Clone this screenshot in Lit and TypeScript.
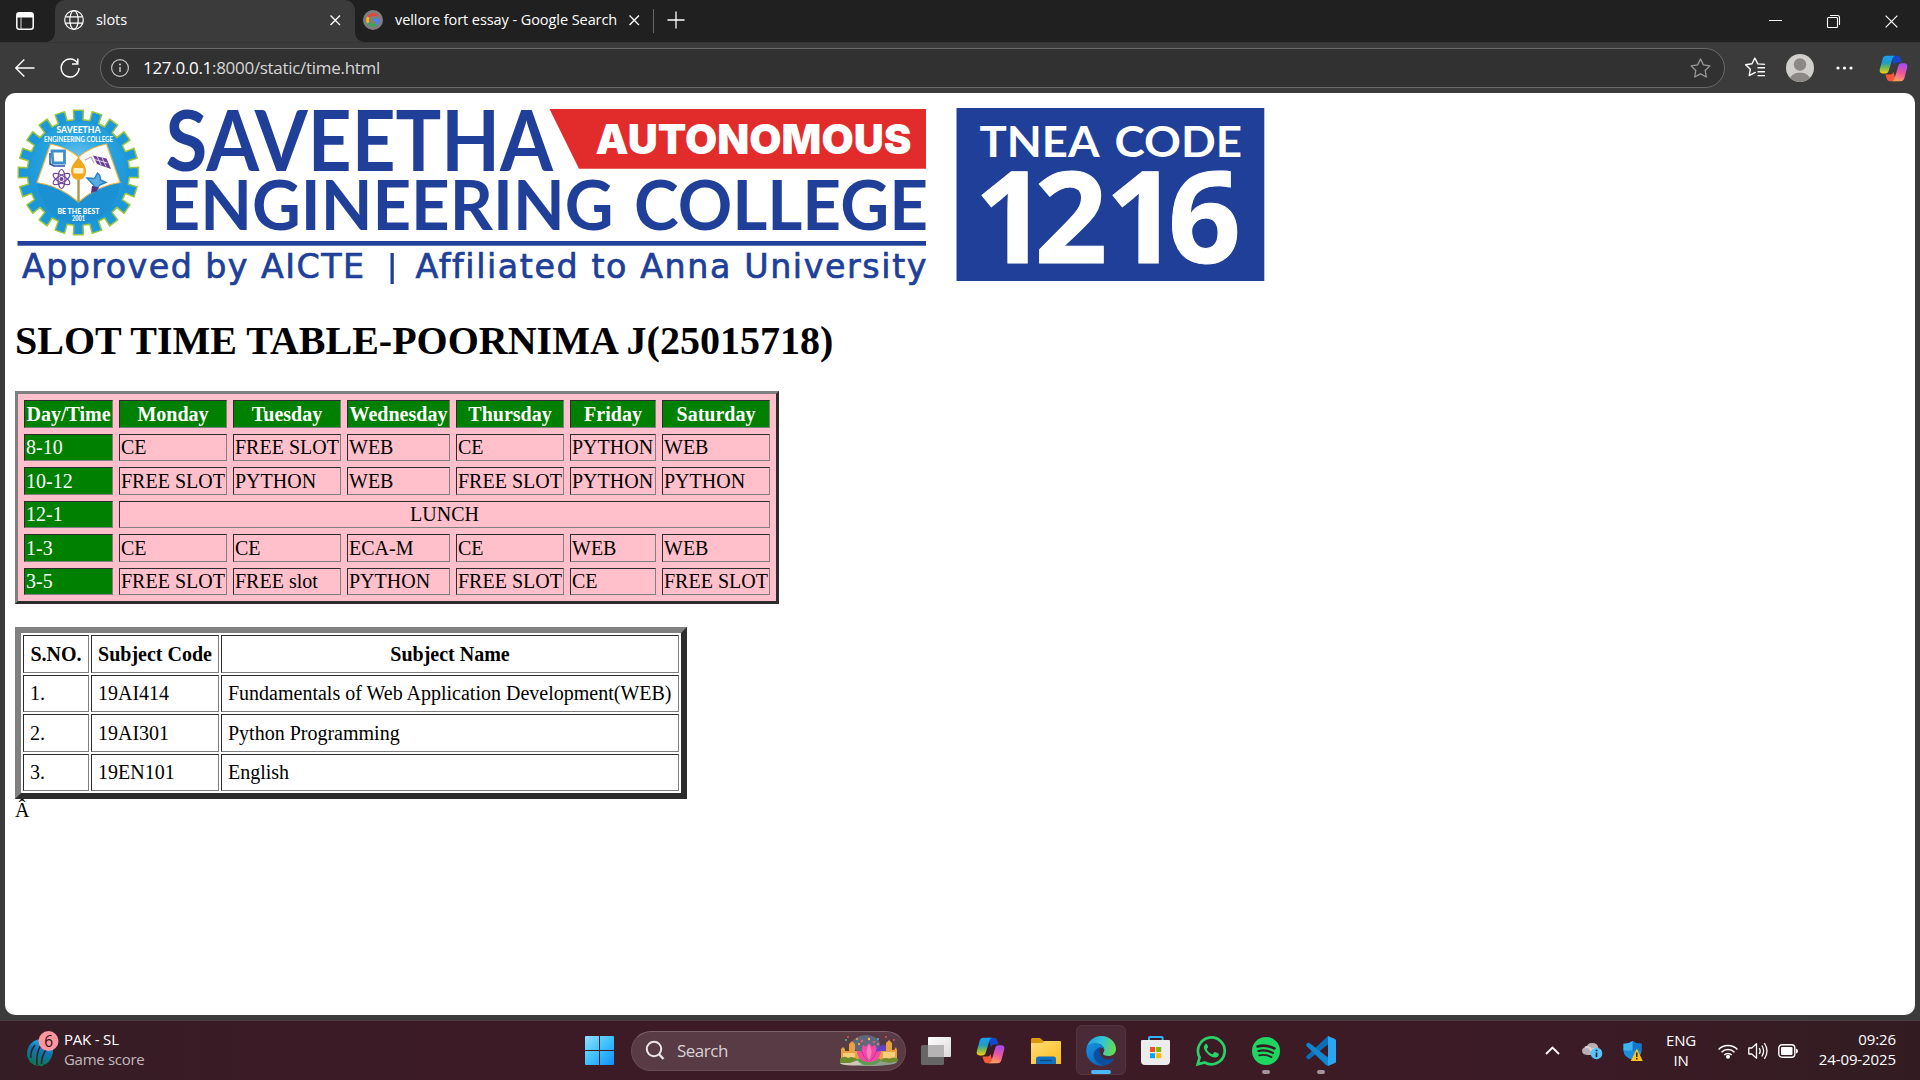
import { LitElement, html, css } from "lit";
import { customElement } from "lit/decorators.js";

const UI = css`"Open Sans", "Noto Sans", sans-serif`;

/* ---------- shared icon drawings ---------- */
const copilot = (id: string) => html`<svg width="29" height="27" viewBox="0 0 29 27">
  <defs>
    <linearGradient id="${id}a" x1="0" y1="0" x2="0" y2="1">
      <stop offset="0" stop-color="#18a0f2" /><stop offset=".4" stop-color="#1f9bc9" />
      <stop offset=".7" stop-color="#7dbb4a" /><stop offset="1" stop-color="#f5cf12" />
    </linearGradient>
    <linearGradient id="${id}b" x1="0.6" y1="0" x2="0.3" y2="1">
      <stop offset="0" stop-color="#a64af0" /><stop offset=".5" stop-color="#f0569c" /><stop offset="1" stop-color="#ffa35c" />
    </linearGradient>
  </defs>
  <path d="M12 .8h6.200c1.800 0 2.700 1 3.200 2.600l1.300 4.200h-4.200c-2 0-2.900 1.200-3.400 2.800l-1.500-5z" fill="#1747c8" />
  <path d="M17 26.200h-6c-1.800 0-2.800-1-3.300-2.600l-1.300-4h4.800c2 0 2.800-1.200 3.300-2.800l1.300 5z" fill="#f4583a" />
  <path d="M7.500.8h8.700c-1.700.4-2.400 1.600-2.900 3.200L9.800 15.500c-.6 2-1.600 2.900-3.500 2.900H3.600C1.200 18.400.2 16.600.8 14.300L3.600 4C4.200 1.900 5.500.8 7.500.8z" fill="url(#${id}a)" />
  <path d="M21.500 26.200h-8.700c1.700-.4 2.400-1.600 2.900-3.200l3.500-11.800c.6-2 1.600-2.900 3.500-2.900h2.700c2.400 0 3.400 1.800 2.800 4.100L25.400 23c-.6 2.100-1.900 3.200-3.900 3.200z" fill="url(#${id}b)" />
</svg>`;

const cross = (s: number, w = 1.3) => html`<svg width="${s}" height="${s}" viewBox="0 0 12 12">
  <path d="M.6.6l10.800 10.800M11.400.6L.6 11.400" stroke="#fff" stroke-width="${w}" fill="none" />
</svg>`;

/* ---------- college banner ---------- */
@customElement("college-banner")
class CollegeBanner extends LitElement {
  static styles = css`
    :host { display: block; height: 188px; }
    svg { display: block; overflow: visible; }
    .navy { fill: #203f99; }
    .white { fill: #fff; }
    .lato { font-family: Lato, sans-serif; }
    .heavy { font-family: Inter, sans-serif; font-weight: 900; }
    .num { font-family: "Open Sans", sans-serif; font-weight: 700; stroke: #fff; stroke-width: 1px; }
    .tag { font-family: "DejaVu Sans", sans-serif; font-variant-ligatures: none; stroke: #203f99; stroke-width: 0.7px; }
  `;

  private gear() {
    const pts: string[] = [];
    const n = 20;
    for (let i = 0; i < n; i++) {
      const a = (i * 2 * Math.PI) / n - Math.PI / 2;
      const at = (r: number, half: number) => {
        const t = Math.atan2(half, r);
        pts.push(`${(78.4 + r * 0.965 * Math.cos(a + t)).toFixed(2)},${(172.5 + r * Math.sin(a + t)).toFixed(2)}`);
      };
      at(53, -4.8); at(62.5, -5.2); at(62.5, 5.2); at(53, 4.8);
    }
    return pts.join(" ");
  }

  render() {
    return html`<svg width="1255" height="188" viewBox="15 103 1255 188">
      <defs>
        <radialGradient id="sky" cx=".5" cy=".4" r=".6">
          <stop offset="0" stop-color="#7cc8f2" /><stop offset=".45" stop-color="#2aa7e3" /><stop offset="1" stop-color="#1b93d5" />
        </radialGradient>
      </defs>
      <polygon points="${this.gear()}" fill="#1c97da" stroke="#9cc63b" stroke-width="1.500" stroke-linejoin="round" />
      <ellipse cx="78.400" cy="172.500" rx="49" ry="50.500" fill="url(#sky)" />
      <path d="M37 183c14 2 30 10 41.500 20 11.500-10 27-18 41.500-20-2 22-19 40-41.500 40S39 205 37 183z" fill="#1b90d3" />
      <path d="M50.500 144c11 2 21 7 28 13 7-6 17-11 28-13l13.500 38.500c-16 2-30 9.500-41.500 19.500-11.500-10-25-17-41.500-19.500z" fill="#fff" stroke="#eeb548" stroke-width="1.200" />
      <path d="M78.500 180v22" stroke="#a99a4c" stroke-width="2.400" />
      <path d="M78.500 156c1.500 5 7.500 8 7.500 15 0 5-3 9-7.500 9s-7.500-4-7.500-9c0-7 6-10 7.500-15z" fill="#f2a81d" />
      <rect x="73.500" y="168" width="10" height="5.500" rx="1" fill="#fff2cf" />
      <g fill="none">
        <path d="M52 151h12.500v12H53z" stroke="#3e8fcc" stroke-width="2.800" />
        <path d="M50 153v11l4 2h11" stroke="#28539f" stroke-width="1.500" />
        <g stroke="#72449a" stroke-width="1.200">
          <ellipse cx="61.500" cy="179" rx="3.500" ry="9.500" />
          <ellipse cx="61.500" cy="179" rx="3.500" ry="9.500" transform="rotate(60 61.500 179)" />
          <ellipse cx="61.500" cy="179" rx="3.500" ry="9.500" transform="rotate(120 61.500 179)" />
        </g>
        <path d="M85 160l6-3 3 6" stroke="#b9a3cf" stroke-width="1.200" />
      </g>
      <path d="M93 155.500l13.500 3 4.500 10.500-14-5z" fill="#6c3f94" />
      <path d="M97 156l4 9M102 157.500l4 9M94.500 159.500l13 3.500" stroke="#e9e0f2" stroke-width=".9" fill="none" />
      <path d="M87 178l7.500.5 3-5.500q3 2 3 7l5.500 2.500-6.500 2.500-3 6-3-6z" fill="#58aee0" stroke="#2c7fc4" stroke-width="1.400" />
      <circle cx="61.500" cy="179" r="2" fill="#72449a" />
      <path d="M92 186l6 1-1 4-6 2z" fill="#5c2f86" />
      <g class="lato white" font-weight="900">
        <text x="56.500" y="133" font-size="8.500" textLength="44" lengthAdjust="spacingAndGlyphs">SAVEETHA</text>
        <text x="44" y="142" font-size="7.500" font-weight="700" textLength="69" lengthAdjust="spacingAndGlyphs">ENGINEERING COLLEGE</text>
        <text x="57.500" y="213.500" font-size="7" textLength="42" lengthAdjust="spacingAndGlyphs">BE THE BEST</text>
        <text x="72" y="220.500" font-size="6.500" textLength="13" lengthAdjust="spacingAndGlyphs">2001</text>
      </g>
      <g class="lato navy" font-weight="700">
        <text x="165.500" y="170.700" font-size="83.500" textLength="387.500" lengthAdjust="spacingAndGlyphs">SAVEETHA</text>
        <text x="161.500" y="230.300" font-size="69" textLength="452" lengthAdjust="spacingAndGlyphs">ENGINEERING</text>
        <text x="634" y="230.300" font-size="69" textLength="294" lengthAdjust="spacingAndGlyphs">COLLEGE</text>
      </g>
      <polygon points="549.500,109 926,109 926,168.800 579,168.800" fill="#e22c2b" />
      <text class="heavy white" x="595.500" y="153.500" font-size="41" textLength="316" lengthAdjust="spacingAndGlyphs">AUTONOMOUS</text>
      <rect class="navy" x="17.500" y="241" width="908.500" height="4.700" />
      <g class="tag navy" font-size="33.300">
        <text x="22" y="277.700" textLength="342">Approved by AICTE</text>
        <rect x="390.500" y="253" width="3.300" height="31" stroke="none" />
        <text x="415.500" y="277.700" textLength="511">Affiliated to Anna University</text>
      </g>
      <rect class="navy" x="956.500" y="108" width="307.800" height="173" />
      <g class="lato white" font-weight="700" font-size="42.500">
        <text x="979.500" y="156.700" textLength="120" lengthAdjust="spacingAndGlyphs">TNEA</text>
        <text x="1114.500" y="156.700" textLength="127.500" lengthAdjust="spacingAndGlyphs">CODE</text>
      </g>
      <text class="num white" y="262.700" font-size="127.500" x="974.500 1034.500 1105.500 1168">1216</text>
    </svg>`;
  }
}

/* ---------- browser chrome ---------- */
@customElement("browser-chrome")
class BrowserChrome extends LitElement {
  static styles = css`
    :host { display: block; font-family: ${UI}; color: #fff; }
    svg { display: block; flex: none; overflow: visible; }
    .strip { height: 42px; background: #202020; display: flex; align-items: center; box-sizing: border-box; }
    .ws { width: 55px; display: flex; padding-left: 16px; box-sizing: border-box; }
    .tab { position: relative; height: 42px; width: 300px; box-sizing: border-box; background: #3b3b3b; border-radius: 10px 10px 0 0; display: flex; align-items: center; padding: 0 15px 2px 9px; }
    .tab::before, .tab::after { content: ""; position: absolute; bottom: 0; width: 9px; height: 9px; }
    .tab::before { left: -9px; background: radial-gradient(circle at 0 0, #202020 8.5px, #3b3b3b 9px); }
    .tab::after { right: -9px; background: radial-gradient(circle at 100% 0, #202020 8.5px, #3b3b3b 9px); }
    .title { font-size: 14.5px; letter-spacing: -0.07px; margin-left: 12px; flex: 1; white-space: nowrap; padding-bottom: 2px; }
    .tab2 { width: 297px; height: 42px; box-sizing: border-box; display: flex; align-items: center; padding: 0 13px 2px 8px; }
    .sep { width: 1px; height: 24px; background: #666; margin: 0 13px 0 1px; }
    .plus { padding-bottom: 2px; }
    .win { margin-left: auto; display: flex; align-items: center; gap: 45px; padding-right: 22px; }
    .bar { height: 51px; background: #3b3b3b; display: flex; align-items: center; box-sizing: border-box; border-top: 1px solid #353535; }
    .nav { display: flex; gap: 25px; padding-left: 15px; width: 100px; box-sizing: border-box; }
    .addr { width: 1625px; height: 40px; box-sizing: border-box; border: 1px solid #6a6a6a; border-radius: 20px; background: #313131; display: flex; align-items: center; padding: 0 13px 0 10px; }
    .url { font-size: 17px; letter-spacing: -0.3px; margin-left: 14px; flex: 1; color: #d6d6d6; white-space: nowrap; line-height: 24px; }
    .host { color: #fff; }
    .tools { display: flex; align-items: center; flex: 1; padding-left: 20px; }
    .a { margin-left: 21px; } .b { margin-left: 22px; } .c { margin-left: 26px; }
  `;
  render() {
    return html`
      <div class="strip">
        <div class="ws"><svg width="18" height="18" viewBox="0 0 18 18"><rect x=".8" y=".8" width="16.400" height="16.400" rx="2.500" fill="none" stroke="#fff" stroke-width="1.500" /><path d="M1 1h16v4.500H1z" fill="#fff" /><path d="M5 5v12" stroke="#bbb" stroke-width="1.200" /></svg></div>
        <div class="tab">
          <svg width="20" height="20" viewBox="0 0 20 20" fill="none" stroke="#fff" stroke-width="1.200"><circle cx="10" cy="10" r="9.300" /><ellipse cx="10" cy="10" rx="4.200" ry="9.300" /><path d="M1.500 6.800h17M1.500 13.200h17" /></svg>
          <span class="title">slots</span>${cross(10.5, 1.5)}
        </div>
        <div class="tab2">
          <svg width="20" height="20" viewBox="0 0 20 20"><circle cx="10" cy="10" r="10" fill="#807d7c" /><g fill="none" stroke-width="2.500"><path d="M14.200 6.200A5.500 5.500 0 0 0 5.300 7.200" stroke="#ea4335" /><path d="M5.300 7.200a5.500 5.500 0 0 0 0 5.600" stroke="#fbbc05" /><path d="M5.300 12.800a5.500 5.500 0 0 0 8.200 1.300" stroke="#34a853" /><path d="M13.500 14.100a5.500 5.500 0 0 0 2-4.100H10.300" stroke="#4285f4" /></g></svg>
          <span class="title">vellore fort essay - Google Search</span>${cross(10.5, 1.5)}
        </div>
        <div class="sep"></div>
        <div class="plus"><svg width="18" height="18" viewBox="0 0 18 18"><path d="M9 .5v17M.5 9h17" stroke="#fff" stroke-width="1.300" /></svg></div>
        <div class="win">
          <svg width="13" height="13" viewBox="0 0 13 13"><path d="M0 5.500h13" stroke="#fff" /></svg>
          <svg width="13" height="13" viewBox="0 0 13 13" fill="none" stroke="#fff" stroke-width="1.100"><rect x=".5" y="2.500" width="10" height="10" rx="1" /><path d="M3 .5h7.500q2 0 2 2V10" /></svg>
          ${cross(13, 1.1)}
        </div>
      </div>
      <div class="bar">
        <div class="nav">
          <svg width="20" height="20" viewBox="0 0 20 20" fill="none" stroke="#fff" stroke-width="1.400"><path d="M19.500 10H.8M9.300 1.500L.8 10l8.500 8.500" /></svg>
          <svg width="20" height="20" viewBox="0 0 20 20" fill="none" stroke="#fff" stroke-width="1.500"><path d="M17.500 5A8.900 9 0 1 0 19 10M17.800.5v5.600h-5.800" /></svg>
        </div>
        <div class="addr">
          <svg width="18" height="18" viewBox="0 0 18 18" fill="none" stroke="#c8c8c8" stroke-width="1.200"><circle cx="9" cy="9" r="8.400" /><path d="M9 8v5" stroke-width="1.500" /><circle cx="9" cy="5.500" r=".5" /></svg>
          <span class="url"><span class="host">127.0.0.1</span>:8000/static/time.html</span>
          <svg width="21" height="20" viewBox="0 0 21 20" fill="none" stroke="#9a9a9a" stroke-width="1.300" stroke-linejoin="round"><path d="M10.500 1l2.900 5.900 6.500 1-4.700 4.600 1.100 6.500-5.800-3.100L4.700 19l1.100-6.500L1.100 7.900l6.500-1z" /></svg>
        </div>
        <div class="tools">
          <svg width="20" height="20" viewBox="0 0 20 20" fill="none" stroke="#fff" stroke-width="1.400" stroke-linejoin="round"><path d="M20 7.400l-7.200-.5L9.800 1 7 6.800l-6.300 1 4.600 4.500L4.200 18.600l5.600-3 1 -.3M12.500 10.800H20M12.500 14.800H20M12.500 18.600H20" transform="translate(0 -1)" /></svg>
          <svg class="a" width="28" height="28" viewBox="0 0 28 28"><clipPath id="av"><circle cx="14" cy="14" r="14" /></clipPath><circle cx="14" cy="14" r="14" fill="#d1cfcb" /><circle cx="14" cy="10.500" r="6.200" fill="#8c8885" /><ellipse cx="14" cy="25.500" rx="10" ry="7" fill="#8c8885" clip-path="url(#av)" /></svg>
          <svg class="b" width="17" height="4" viewBox="0 0 17 4" fill="#fff"><circle cx="2" cy="2" r="1.600" /><circle cx="8.500" cy="2" r="1.600" /><circle cx="15" cy="2" r="1.600" /></svg>
          <span class="c">${copilot("t")}</span>
        </div>
      </div>`;
  }
}

/* ---------- web page ---------- */
const DAYS = ["Day/Time", "Monday", "Tuesday", "Wednesday", "Thursday", "Friday", "Saturday"];
const SLOTS: string[][] = [
  ["8-10", "CE", "FREE SLOT", "WEB", "CE", "PYTHON", "WEB"],
  ["10-12", "FREE SLOT", "PYTHON", "WEB", "FREE SLOT", "PYTHON", "PYTHON"],
  ["12-1", "LUNCH"],
  ["1-3", "CE", "CE", "ECA-M", "CE", "WEB", "WEB"],
  ["3-5", "FREE SLOT", "FREE slot", "PYTHON", "FREE SLOT", "CE", "FREE SLOT"],
];
const SUBJECTS = [
  ["1.", "19AI414", "Fundamentals of Web Application Development(WEB)"],
  ["2.", "19AI301", "Python Programming"],
  ["3.", "19EN101", "English"],
];

@customElement("slots-page")
class SlotsPage extends LitElement {
  static styles = css`
    :host { display: block; box-sizing: border-box; background: #fff; color: #000; border-radius: 10px; padding: 10px; font: 20px/23px "Liberation Serif", "Times New Roman", serif; overflow: hidden; }
    h1 { font-size: 40px; line-height: 46px; margin: 27px 0; font-weight: bold; white-space: nowrap; }
    table { table-layout: fixed; box-sizing: border-box; border-style: solid; border-color: #808080 #2c2c2c #2c2c2c #808080; border-collapse: separate; }
    th, td { box-sizing: border-box; border: 1px solid; border-color: #2c2c2c #808080 #808080 #2c2c2c; white-space: nowrap; text-align: left; }
    .tt { width: 764px; border-width: 3px; border-spacing: 6px; background: #ffc0cb; margin-bottom: 23px; }
    .tt tr { height: 27px; } .tt tr:nth-child(odd) { height: 28px; }
    .tt th, .tt td { padding: 0 1px; }
    .tt th { text-align: center; }
    .tt tr > :first-child, .tt th { background: #008000; color: #fff; }
    .tt .lunch { text-align: center; }
    .c89 { width: 89px; } .c108 { width: 108px; } .c103 { width: 103px; } .c86 { width: 86px; }
    .st { width: 672px; border-width: 6px; border-spacing: 2px; }
    .st tr { height: 37px; } .st tr:nth-child(odd) { height: 38px; }
    .st th, .st td { padding: 0 6px; }
    .st th { text-align: center; }
    .c66 { width: 66px; } .c128 { width: 128px; }
  `;
  render() {
    return html`
      <college-banner></college-banner>
      <h1>SLOT TIME TABLE-POORNIMA J(25015718)</h1>
      <table class="tt">
        <colgroup><col class="c89" /><col class="c108" /><col class="c108" /><col class="c103" /><col class="c108" /><col class="c86" /><col class="c108" /></colgroup>
        <tbody>
          <tr>${DAYS.map((d) => html`<th>${d}</th>`)}</tr>
          ${SLOTS.map((r) => html`<tr>${r.map((c) => c === "LUNCH" ? html`<td class="lunch" colspan="6">${c}</td>` : html`<td>${c}</td>`)}</tr>`)}
        </tbody>
      </table>
      <table class="st">
        <colgroup><col class="c66" /><col class="c128" /><col /></colgroup>
        <tbody>
          <tr><th>S.NO.</th><th>Subject Code</th><th>Subject Name</th></tr>
          ${SUBJECTS.map((r) => html`<tr>${r.map((c) => html`<td>${c}</td>`)}</tr>`)}
        </tbody>
      </table>
      <div>Â</div>`;
  }
}

/* ---------- taskbar ---------- */
@customElement("task-bar")
class TaskBar extends LitElement {
  static styles = css`
    :host { display: grid; grid-template-columns: 570px 1fr auto; height: 60px; box-sizing: border-box; border-top: 1px solid #4b3c42; background: linear-gradient(90deg, #351d25 0, #3b1b26 300px, #3d1b26 900px, #3b1b25 1600px, #321c22 1920px); font-family: ${UI}; color: #fff; font-size: 15px; line-height: 20px; letter-spacing: -0.2px; }
    svg { display: block; flex: none; overflow: visible; }
    .left { display: flex; align-items: center; padding-left: 26px; }
    .lines { margin-left: 5px; padding-bottom: 4px; white-space: nowrap; }
    .dim { color: #c2babd; letter-spacing: -0.3px; }
    .mid { display: flex; align-items: center; }
    .start { width: 59px; display: flex; justify-content: center; margin-right: 2px; }
    .search { width: 275px; height: 40px; box-sizing: border-box; border: 1px solid #664c55; border-top-color: #7b636b; border-radius: 20px; background: #593b45; display: flex; align-items: center; padding: 0 7px 0 14px; margin-right: 2px; }
    .q { font-size: 17px; letter-spacing: -0.5px; margin-left: 12px; flex: 1; color: #d9d1d4; }
    .app { position: relative; width: 55px; height: 59px; display: flex; align-items: center; justify-content: center; }
    .app.on::before { content: ""; position: absolute; inset: 4px 2px 5px 3px; box-sizing: border-box; border-radius: 6px; background: #492a36; border: 1px solid #543641; }
    .app svg { position: relative; }
    .app::after { content: ""; position: absolute; bottom: 6px; width: 0; height: 4px; border-radius: 2px; background: #a5949a; }
    .app.run::after { width: 8px; }
    .app.on::after { width: 20px; background: #4cb8fb; }
    .right { display: flex; align-items: center; padding-right: 24px; }
    .i1 { margin-right: 22px; } .i2 { margin-right: 20px; } .i3 { margin-right: 23px; } .i4 { margin-right: 10px; }
    .lang { text-align: center; width: 30px; margin-right: 22px; padding-bottom: 2px; }
    .clock { text-align: right; width: 98px; padding-bottom: 4px; white-space: nowrap; letter-spacing: -0.1px; }
  `;
  render() {
    return html`
      <div class="left">
        <svg width="33" height="36" viewBox="0 0 33 36">
          <defs><linearGradient id="ball" x1="0.700" y1="0" x2=".4" y2="1"><stop offset="0" stop-color="#1fb6f5" /><stop offset=".45" stop-color="#0f74b3" /><stop offset="1" stop-color="#0b7a4a" /></linearGradient></defs>
          <path d="M1 20C2 11 8 6 16 6c8 0 12 6 11 13-1 6-4 10-7 12q-2 1-2 0-1 3-3 2-1 1-2-1-2 2-3 0-2 1-3-1-3-1-4-4-2-3-2-7z" fill="url(#ball)" />
          <path d="M9 12q-5 6-4 13M15 12q-5 7-4 20M20.500 16q-5 7-5 15" stroke="#371d26" stroke-width="1.500" fill="none" />
          <circle cx="22.500" cy="8" r="10" fill="#ff959f" />
          <text x="22.500" y="13.500" text-anchor="middle" font-size="15.500" fill="#2b1014">6</text>
        </svg>
        <div class="lines"><div>PAK - SL</div><div class="dim">Game score</div></div>
      </div>
      <div class="mid">
        <div class="start">
          <svg width="29" height="29" viewBox="0 0 29 29"><defs><linearGradient id="wn" x1="0" y1="0" x2="1" y2="1"><stop offset="0" stop-color="#90dfff" /><stop offset=".5" stop-color="#3fc1fd" /><stop offset="1" stop-color="#0f8ffa" /></linearGradient></defs>
            <path d="M1 0h13v14H0V1q0-1 1-1zM15 0h13q1 0 1 1v13H15zM0 15h14v14H1q-1 0-1-1zM15 15h14v13q0 1-1 1H15z" fill="url(#wn)" /></svg>
        </div>
        <div class="search">
          <svg width="19" height="19" viewBox="0 0 19 19" fill="none" stroke="#ece6e8" stroke-width="2"><circle cx="8" cy="8" r="7.200" /><path d="M13 13.200l4.500 4.800" stroke-width="2.400" /></svg>
          <span class="q">Search</span>
          <svg width="58" height="31" viewBox="0 0 58 31">
            <ellipse cx="29" cy="27" rx="28" ry="4" fill="#8fa093" />
            <ellipse cx="12" cy="28" rx="12" ry="2.500" fill="#cfc8b9" />
            <ellipse cx="26" cy="9" rx="14" ry="9" fill="#60687b" />
            <path d="M36 14q6-6 12-3v8H34z" fill="#6443c8" />
            <path d="M1 14l2-2 2 2v2h4V9l3-3 3 3v7h5v9H1zM42 16h4V8l3-3 3 3v7h2l2-3 1 3v10H38v-8z" fill="#e9a03f" />
            <path d="M3 18h12v5H3zM43 17h12v6H43z" fill="#f7cf7b" />
            <path d="M0 24q4-4 8-1 5-3 10 2l-8 3H0zM40 26q4-5 9-2 5-3 9 0v2l-8 2z" fill="#6d8c2c" />
            <path d="M17 24q12-4 24 0-2 6-12 6t-12-6z" fill="#5f9a50" />
            <path d="M17 16q3-.5 5 1-1-4 1-7 2 .5 3 2 1-2 3-4 2 2 3 4 1-1.500 3-2 2 3 1 7 2-1.500 5-1-1 11-12 11T17 16z" fill="#f04aa5" />
            <path d="M29 9q5 8 0 16-5-8 0-16z" fill="#fa7dc0" />
            <path d="M22 17q2 6 6 9M36 17q-2 6-6 9" stroke="#cf2c8a" fill="none" />
            <g><circle cx="8" cy="2" r="1" fill="#e8553c" /><circle cx="6" cy="5" r=".9" fill="#5fb8a0" /><circle cx="17" cy="4" r="1" fill="#f0a040" /><circle cx="22" cy="6" r="1.200" fill="#f46060" /><circle cx="29" cy="4" r="1.200" fill="#f5c04e" /><circle cx="34" cy="7" r="1.100" fill="#f46060" /><circle cx="38" cy="4" r="1" fill="#58b4e0" /><circle cx="46" cy="2" r="1" fill="#e8553c" /><circle cx="54" cy="5" r="1" fill="#e8553c" /><circle cx="19" cy="9" r="1" fill="#f5c04e" /><circle cx="38" cy="9" r="1" fill="#ef74b4" /></g>
          </svg>
        </div>
        <div class="app"><svg width="30" height="28" viewBox="0 0 30 28"><defs><linearGradient id="tv" x1="0" y1="0" x2="1" y2="1"><stop offset="0" stop-color="#fff" /><stop offset="1" stop-color="#d9d9d9" /></linearGradient></defs><rect x="7" width="23" height="20" rx="1" fill="url(#tv)" /><rect y="8" width="23" height="20" rx="1.500" fill="#666" /><rect x="7" y="8" width="16" height="12" fill="#b5b3b3" /></svg></div>
        <div class="app">${copilot("k")}</div>
        <div class="app"><svg width="30" height="26" viewBox="0 0 30 26"><defs><linearGradient id="fo" x1="0" y1="0" x2="1" y2="1"><stop offset="0" stop-color="#ffdd76" /><stop offset="1" stop-color="#fcbc1e" /></linearGradient></defs><path d="M0 1.500Q0 0 1.500 0H9l3.500 3H29v5H0z" fill="#dd9a07" /><path d="M0 5h11l2.500-2H29q1 0 1 1v22H0z" fill="url(#fo)" /><path d="M5 26v-5q0-2.500 2.500-2.500h15q2.500 0 2.500 2.500v5z" fill="#1270be" /><path d="M9 22.500h12" stroke="#084888" stroke-width="1.300" /></svg></div>
        <div class="app on"><svg width="30" height="30" viewBox="0 0 30 30">
          <defs><linearGradient id="e1" x1="0" y1=".3" x2="1" y2=".5"><stop offset="0" stop-color="#1e9fe5" /><stop offset=".5" stop-color="#30c4d8" /><stop offset="1" stop-color="#68dc4c" /></linearGradient><linearGradient id="e2" x1="0" y1="0" x2=".6" y2="1"><stop offset="0" stop-color="#1592e0" /><stop offset="1" stop-color="#0b69c2" /></linearGradient></defs>
          <path d="M.4 13C1.500 5.500 7.500 0 15 0c9 0 15 6.500 15 13 0 4.500-3.500 7-7.500 7-3.500 0-5.500-1.200-5.500-2.300 0-1 1.300-1.700 1.300-4C18.300 10.500 15 7.500 10 7.500 5 7.500 1.500 9.500.4 13z" fill="url(#e1)" />
          <path d="M.3 13C1.200 9.500 5 7.300 9.500 7.300c5 0 8.800 3 8.800 6.500-.5-1.500-2-2.500-4-2.300-3 .3-5.300 4-4.300 8.500 1 5 5 9 9 9.200A15 15 0 0 1 .3 13z" fill="url(#e2)" />
          <path d="M14.300 11.500c-5 1-8 5.500-6 10.500 2 4.800 6.500 8 11.200 7.300 3.500-.7 6.500-3 8.200-5.800.4-.8-.3-1.200-1-.8-3.500 1.600-8.500 1-11.200-2.200-2.400-3-2.600-6.500-1.200-9z" fill="#0d4f9f" />
        </svg></div>
        <div class="app"><svg width="29" height="29" viewBox="0 0 29 29"><path d="M8 6V1.800Q8 1 8.800 1h12q.8 0 .8.800V6" fill="none" stroke="#2eb4f4" stroke-width="2" /><path d="M1 4h27q1 0 1 1v20q0 4-4 4H4q-4 0-4-4V5q0-1 1-1z" fill="#ececec" /><path d="M9 11h5v5H9z" fill="#f25022" /><path d="M15.200 11h5v5h-5z" fill="#7fba00" /><path d="M9 17.200h5v5H9z" fill="#00a4ef" /><path d="M15.200 17.200h5v5h-5z" fill="#ffb900" /></svg></div>
        <div class="app"><svg width="30" height="30" viewBox="0 0 30 30"><path d="M1.700 28.300l1.900-7A13.400 13.400 0 1 1 8.700 26.500z" fill="none" stroke="#25d366" stroke-width="2.700" /><path d="M10.800 8q-.6-.5-1.300 0-1.800 1.500-1.700 3.600c.2 2 2.200 5 4.500 7 2.500 2.100 5 3.200 7.200 3 1.900-.3 3.300-1.700 3.300-3.300 0-.6-.3-.8-.8-1l-2.800-1.300q-.7-.3-1.200.4l-1.200 1.500q-.4.400-1 .1c-2.200-1-3.700-2.500-4.900-4.500q-.3-.5.2-1l.9-1.100q.3-.5.1-1z" fill="#25d366" /></svg></div>
        <div class="app run"><svg width="28" height="28" viewBox="0 0 28 28"><circle cx="14" cy="14" r="14" fill="#1ed760" /><g fill="none" stroke="#3a1b25" stroke-linecap="round"><path d="M5.500 9.500q8.500-2.500 17 2" stroke-width="2.600" /><path d="M6.500 14q7.500-2 14.500 2" stroke-width="2.200" /><path d="M7.200 18.300q6.500-1.500 12.300 1.800" stroke-width="1.800" /></g></svg></div>
        <div class="app run"><svg width="30" height="30" viewBox="0 0 30 30"><path d="M22 0l7 3q1 .5 1 1.500v21q0 1-1 1.500l-7 3z" fill="#2aa6f2" /><path d="M22 0v8.500L3.500 23q-1 .7-1.900 0L.4 21.700q-.8-1 .1-1.800z" fill="#0a6db5" /><path d="M22 30v-8.500L3.500 7q-1-.7-1.900 0L.4 8.300q-.8 1 .1 1.800L20 29z" fill="#1285cf" /></svg></div>
      </div>
      <div class="right">
        <svg class="i1" width="15" height="9" viewBox="0 0 15 9"><path d="M1 8l6.500-6.500L14 8" fill="none" stroke="#fff" stroke-width="1.800" /></svg>
        <svg class="i2" width="21" height="20" viewBox="0 0 21 20"><path d="M5 14q-5-.5-5-4.500Q.5 6 4.500 6 6 1.500 10.500 2q5 0 6 5 3 1 3 4 0 3-4 3z" fill="#b9aeb2" /><path d="M3 6.500Q7 5 9 9l5-1.500" stroke="#ddd6d8" fill="none" stroke-width="2" /><circle cx="14.500" cy="12.500" r="5.800" fill="#56c5fa" /><path d="M14.500 11.500v4.500M14.500 8.700v1.600" stroke="#06283d" stroke-width="1.700" /></svg>
        <svg class="i3" width="20" height="20" viewBox="0 0 20 20"><path d="M9.500 0q3 2.500 9 2.800v7q0 6-9 9.200-9-3.200-9-9.200v-7Q6.500 2.500 9.500 0z" fill="#1a8fdf" /><path d="M9.500 0q3 2.500 9 2.800V9.500h-9z" fill="#1277c9" /><path d="M.5 2.800Q6.500 2.500 9.500 0v9.500H.5z" fill="#3bb4f2" /><path d="M13.800 7.500l6 12.500h-12z" fill="#fdc21b" /><path d="M13.800 11.500v4.500M13.800 17v1.600" stroke="#33250a" stroke-width="1.500" /></svg>
        <div class="lang">ENG<br />IN</div>
        <svg class="i4" width="20" height="16" viewBox="0 0 20 16" fill="none" stroke="#fff" stroke-width="1.500"><path d="M.6 6.500a13.300 13.300 0 0 1 18.800 0M3.500 9.300a9.200 9.200 0 0 1 13 0M6.300 12a5.200 5.200 0 0 1 7.400 0" /><circle cx="10" cy="13.700" r="1.300" fill="#fff" /></svg>
        <svg class="i4" width="20" height="18" viewBox="0 0 20 18" fill="none" stroke="#fff" stroke-width="1.300" stroke-linejoin="round"><path d="M.8 6h3L8.500 1.800v14.400L3.800 12h-3zM11.300 6q1.800 3 0 6M13.800 3.500q3.700 5.500 0 11M16.400 1.200q5.200 7.800 0 15.600" /></svg>
        <svg width="20" height="14" viewBox="0 0 20 14"><rect x=".8" y=".8" width="16" height="12.400" rx="3.200" fill="none" stroke="#fff" stroke-width="1.400" /><rect x="3" y="3" width="11.500" height="8" rx="1.200" fill="#fff" /><path d="M18 4.500q2 .5 2 2.500t-2 2.500z" fill="#fff" /></svg>
        <div class="clock">09:26<br />24-09-2025</div>
      </div>`;
  }
}

@customElement("app-root")
class AppRoot extends LitElement {
  static styles = css`
    :host { display: flex; flex-direction: column; width: 1920px; height: 1080px; background: #3b3b3b; overflow: hidden; }
    .view { height: 922px; margin: 0 5px 5px; display: grid; box-sizing: border-box; }
  `;
  render() {
    return html`<browser-chrome></browser-chrome>
      <div class="view"><slots-page></slots-page></div>
      <task-bar></task-bar>`;
  }
}
